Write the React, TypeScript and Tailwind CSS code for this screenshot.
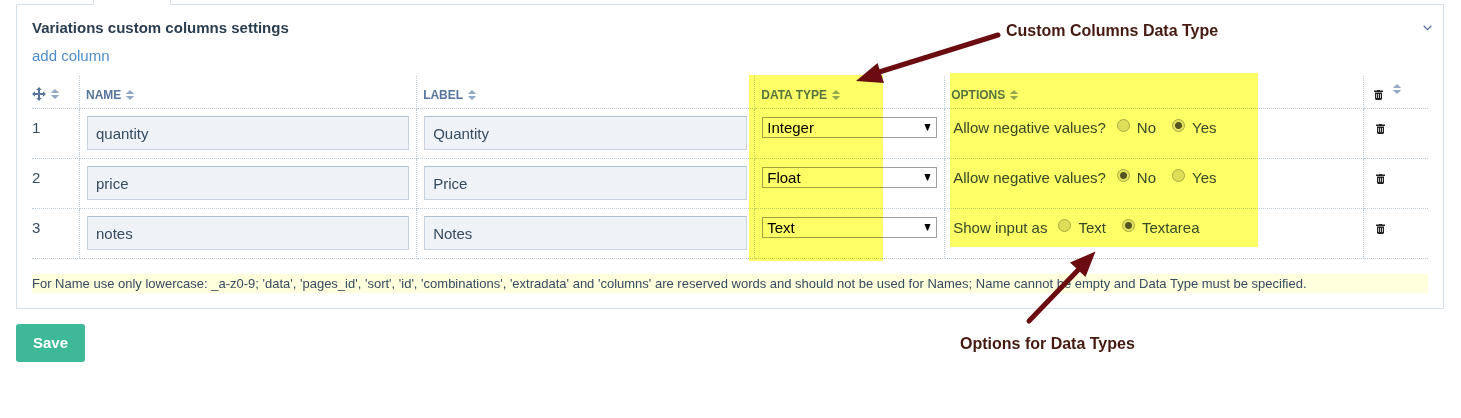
import { useState } from "react";

type Column = {
  name: string;
  label: string;
  type: string;
  question: string;
  choices: string[];
  selected: string;
};

const DATA_TYPES = ["Integer", "Float", "Text"];

const COLUMNS: Column[] = [
  { name: "quantity", label: "Quantity", type: "Integer", question: "Allow negative values?", choices: ["No", "Yes"], selected: "Yes" },
  { name: "price", label: "Price", type: "Float", question: "Allow negative values?", choices: ["No", "Yes"], selected: "No" },
  { name: "notes", label: "Notes", type: "Text", question: "Show input as", choices: ["Text", "Textarea"], selected: "Textarea" },
];

const CELL = "border-b border-dotted border-[#bccad6] p-[7px] align-top";
const HEAD = "border-b border-dotted border-[#bccad6] px-[6px] text-left text-xs font-bold text-[#55759c]";
const FIELD =
  "block h-[34px] w-full border border-[#c8d3df] border-t-[#adbfd2] bg-[#eff3f8] px-2 text-[15px] text-[#354b60] outline-none";

function SortIcon() {
  return (
    <svg className="h-[10px] w-2 shrink-0" viewBox="0 0 8 10" fill="#94a9c5" aria-hidden="true">
      <path d="M4 0 7.800 3.400V4H.2V3.400zM4 10 .2 6.600V6H7.800V6.600z" />
    </svg>
  );
}

function MoveIcon() {
  return (
    <svg className="h-[14px] w-[14px] shrink-0" viewBox="0 0 14 14" fill="#55759c" aria-hidden="true">
      <path d="M7 0 9.800 3H8v3h3V4.200L14 7l-3 2.800V8H8v3h1.800L7 14l-2.800-3H6V8H3v1.800L0 7l3-2.800V6h3V3H4.200z" />
    </svg>
  );
}

function TrashIcon() {
  return (
    <svg className="h-[10px] w-[9px] shrink-0" viewBox="0 0 9 10" fill="#222" aria-hidden="true">
      <path d="M3 0h3v.6h3V2H0V.6h3z" />
      <path d="M1 2.600h7V9L7 10H2L1 9z" />
      <path d="M2.500 4v4M4.500 4v4M6.500 4v4" stroke="#c4c4c4" strokeWidth="1" />
    </svg>
  );
}

function HeadCell({ title }: { title: string }) {
  return (
    <th className={`${HEAD} border-r`}>
      <span className="flex items-center gap-[5px] pt-[5px]">
        {title}
        <SortIcon />
      </span>
    </th>
  );
}

function ColumnRow({ column, index }: { column: Column; index: number }) {
  const [choice, setChoice] = useState(column.selected);

  return (
    <tr className="h-[50px]">
      <td className={`${CELL} border-r pl-0 leading-6`}>{index + 1}</td>
      <td className={`${CELL} border-r`}>
        <input className={FIELD} defaultValue={column.name} aria-label="Name" />
      </td>
      <td className={`${CELL} border-r`}>
        <input className={FIELD} defaultValue={column.label} aria-label="Label" />
      </td>
      <td className={`${CELL} border-r`}>
        <div className="relative flex h-[23px] items-center">
          <select
            className="h-[21px] w-full appearance-none border border-[#a0a0a0] bg-white px-1 text-[15px] leading-[19px] text-black"
            defaultValue={column.type}
            aria-label="Data type"
          >
            {DATA_TYPES.map((t) => (
              <option key={t}>{t}</option>
            ))}
          </select>
          <svg className="pointer-events-none absolute top-2 right-[6px] h-[7px] w-[7px]" viewBox="0 0 7 7" aria-hidden="true">
            <path d="M.5 0h6L4 6.500H3z" />
          </svg>
        </div>
      </td>
      <td className={`${CELL} border-r`}>
        <fieldset className="flex gap-4 pl-px leading-6">
          <legend className="float-left -mr-[5px]">{column.question}</legend>
          {column.choices.map((c) => (
            <label key={c} className="flex items-start gap-[7px]">
              <input
                type="radio"
                name={`option-${column.name}`}
                className="mt-[3px] h-[13px] w-[13px] appearance-none rounded-full border border-[#a9a9a9] bg-[#dedede] checked:bg-[radial-gradient(circle,#555_3px,#e4e4e4_4px)]"
                checked={choice === c}
                onChange={() => setChoice(c)}
              />
              {c}
            </label>
          ))}
        </fieldset>
      </td>
      <td className={CELL}>
        <button type="button" className="flex h-6 items-center pt-[2px] pl-[5px]" aria-label="Delete column">
          <TrashIcon />
        </button>
      </td>
    </tr>
  );
}

function Annotations() {
  return (
    <div className="pointer-events-none absolute top-0 left-0 h-full w-full">
      <div className="absolute top-[75px] left-[749px] h-[186px] w-[134px] bg-[#ffff66] mix-blend-multiply" />
      <div className="absolute top-[73px] left-[950px] h-[174px] w-[308px] bg-[#ffff66] mix-blend-multiply" />
      <svg className="absolute top-[32px] left-[854px] h-[54px] w-[150px]" viewBox="854 32 150 54" fill="#6b0d10" aria-hidden="true">
        <path d="M998 35 876 73" stroke="#6b0d10" strokeWidth="5" strokeLinecap="round" />
        <path d="M856 81 877.5 63 884 83z" />
      </svg>
      <svg className="absolute top-[250px] left-[1024px] h-[76px] w-[74px]" viewBox="1024 250 74 76" fill="#6b0d10" aria-hidden="true">
        <path d="M1029 321 1081 267" stroke="#6b0d10" strokeWidth="5" strokeLinecap="round" />
        <path d="M1095.500 251.500 1070 262.500 1085.500 277z" />
      </svg>
      <p className="absolute top-[21px] left-[1006px] text-base leading-5 font-bold whitespace-nowrap text-[#45190f]">
        Custom Columns Data Type
      </p>
      <p className="absolute top-[334px] left-[960px] text-base leading-5 font-bold whitespace-nowrap text-[#45190f]">
        Options for Data Types
      </p>
    </div>
  );
}

export default function App() {
  return (
    <main className="relative isolate bg-white px-4 pb-14 font-['Liberation_Sans',Arial,sans-serif] text-[15px] text-[#354b60]">
      {/* bottom edge of the active tab */}
      <div className="relative -mb-px ml-[77px] h-[5px] w-[78px] border-x border-[#d5dfe8] bg-white" />

      <section className="mr-px border border-[#d5dfe8] px-[15px] pt-[11px] pb-[15px]">
        <header className="flex items-center justify-between">
          <h2 className="leading-6 font-bold text-[#2b3e50]">Variations custom columns settings</h2>
          <button type="button" aria-label="Collapse" className="-mr-1">
            <svg className="h-[6px] w-[9px]" viewBox="0 0 9 6" fill="none" stroke="#55759c" strokeWidth="1.3" aria-hidden="true">
              <path d="M.7.8 4.500 4.600 8.300.8" />
            </svg>
          </button>
        </header>
        <a href="#add" className="mt-1 block w-fit leading-6 text-[#4f8ec7]">
          add column
        </a>

        <table className="mt-2 w-full table-fixed border-separate border-spacing-0">
          <colgroup>
            <col className="w-12" />
            <col className="w-[24.15%]" />
            <col className="w-[24.22%]" />
            <col className="w-[190px]" />
            <col />
            <col className="w-16" />
          </colgroup>
          <thead>
            <tr className="h-[33px]">
              <th className={`${HEAD} border-r pl-0`}>
                <span className="flex items-center gap-[5px] pt-1">
                  <MoveIcon />
                  <SortIcon />
                </span>
              </th>
              <HeadCell title="NAME" />
              <HeadCell title="LABEL" />
              <HeadCell title="DATA TYPE" />
              <HeadCell title="OPTIONS" />
              <th className={HEAD}>
                <span className="flex items-start gap-[10px] pl-1">
                  <span className="pt-[6px]">
                    <TrashIcon />
                  </span>
                  <SortIcon />
                </span>
              </th>
            </tr>
          </thead>
          <tbody>
            {COLUMNS.map((c, i) => (
              <ColumnRow key={c.name} column={c} index={i} />
            ))}
          </tbody>
        </table>

        <p className="mt-[15px] bg-[#ffffdd] text-[13px] leading-[19px]">
          For Name use only lowercase: _a-z0-9; 'data', 'pages_id', 'sort', 'id', 'combinations', 'extradata' and
          'columns' are reserved words and should not be used for Names; Name cannot be empty and Data Type must be
          specified.
        </p>
      </section>

      <button type="button" className="mt-[15px] h-[38px] rounded-[3px] bg-[#3eb998] px-[17px] font-bold text-white">
        Save
      </button>

      <Annotations />
    </main>
  );
}
